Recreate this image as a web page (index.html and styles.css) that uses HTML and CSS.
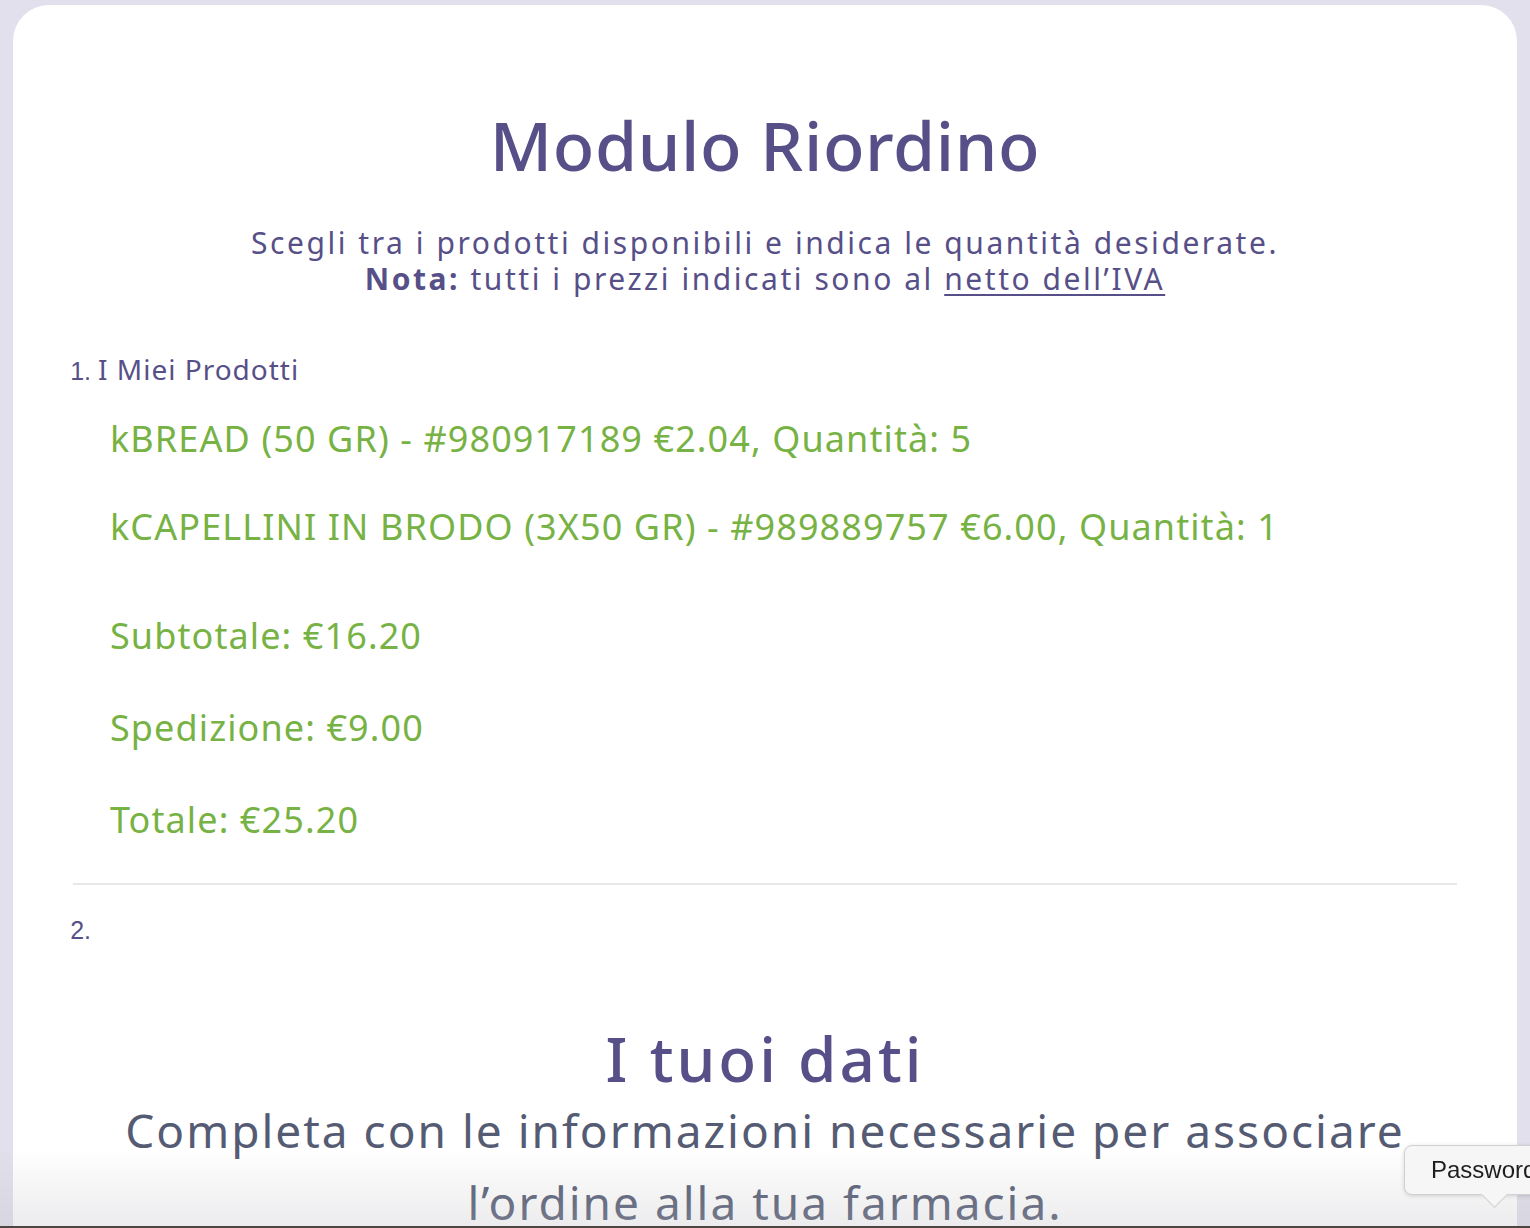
FILE: index.html
```html
<!DOCTYPE html>
<html lang="it">
<head>
    <meta charset="UTF-8">
    <meta name="viewport" content="width=device-width, initial-scale=1.0">
    <title>Modulo Riordino</title>
    <link rel="stylesheet" href="styles.css">
</head>
<body>
    <main class="card">
        <header class="intro">
            <h1>Modulo Riordino</h1>
            <p>
                Scegli tra i prodotti disponibili e indica le quantità desiderate.<br>
                <strong>Nota:</strong> tutti i prezzi indicati sono al <u>netto dell’IVA</u>
            </p>
        </header>

        <ol class="steps">
            <li>
                <span class="step-title">I Miei Prodotti</span>
                <div class="products">
                    <p>kBREAD (50 GR) - #980917189 €2.04, Quantità: 5</p>
                    <p>kCAPELLINI IN BRODO (3X50 GR) - #989889757 €6.00, Quantità: 1</p>
                </div>
                <div class="totals">
                    <p>Subtotale: €16.20</p>
                    <p>Spedizione: €9.00</p>
                    <p>Totale: €25.20</p>
                </div>
                <hr>
            </li>
            <li></li>
        </ol>

        <section class="your-data">
            <h2>I tuoi dati</h2>
            <p>Completa con le informazioni necessarie per associare l’ordine alla tua farmacia.</p>
        </section>
    </main>

    <!-- bottom edge of the window + password autofill hint -->
    <div class="bottom-fade"></div>
    <div class="autofill-hint">Password</div>
</body>
</html>
```

FILE: styles.css
```css
:root {
    --bg: #e1e0ec;
    --card: #ffffff;
    --purple: #574f88;
    --green: #77b244;
    --slate: #545b73;
    --line: #e8e8e8;
}

* {
    margin: 0;
    padding: 0;
    box-sizing: border-box;
}

html {
    overflow: hidden;
}

body {
    font-family: 'Noto Sans', sans-serif;
    background: var(--bg);
    padding: 5px 13px 0;
    color: var(--purple);
}

.card {
    background: var(--card);
    border-radius: 36px 36px 0 0;
    padding: 96px 60px 40px;
    min-height: 1400px;
}

.intro {
    text-align: center;
}

.intro h1 {
    font-size: 68px;
    font-weight: 500;
    line-height: 88px;
    letter-spacing: 0.6px;
}

.intro p {
    margin-top: 36px;
    font-size: 30px;
    line-height: 36px;
    letter-spacing: 2.55px;
}

.intro strong {
    font-weight: 700;
}

.intro u {
    text-decoration-thickness: 2px;
    text-underline-offset: 4px;
}

.steps {
    margin-top: 52px;
    padding-left: 25px;
}

.steps li::marker {
    font-family: 'Liberation Sans', sans-serif;
    font-size: 25px;
}

.step-title {
    font-size: 28px;
    line-height: 40px;
    letter-spacing: 1px;
}

.products,
.totals {
    padding-left: 12px;
    color: var(--green);
    font-size: 36px;
    letter-spacing: 1.1px;
}

.products {
    margin-top: 25px;
}

.products p {
    line-height: 50px;
    margin-bottom: 38px;
}

.totals {
    margin-top: 59px;
}

.totals p {
    line-height: 50px;
    margin-bottom: 42px;
}

.steps hr {
    border: none;
    border-top: 2px solid var(--line);
    margin: -4px 0 0 -25px;
}

.steps li + li {
    margin-top: 26px;
    font-size: 26px;
    line-height: 36px;
    height: 36px;
}

.your-data {
    text-align: center;
    margin-top: 75px;
}

.your-data h2 {
    font-size: 62px;
    font-weight: 500;
    line-height: 72px;
    letter-spacing: 3px;
}

.your-data p {
    color: var(--slate);
    font-size: 46px;
    line-height: 72px;
    letter-spacing: 2px;
    padding: 0 40px;
}

.bottom-fade {
    position: fixed;
    left: 0;
    right: 0;
    bottom: 0;
    height: 78px;
    background: linear-gradient(to bottom, rgba(190, 190, 196, 0) 0%, rgba(190, 190, 196, 0.3) 100%);
    border-bottom: 2px solid #4d4640;
    pointer-events: none;
}

.autofill-hint {
    position: fixed;
    left: 1404px;
    top: 1145px;
    width: 200px;
    height: 50px;
    padding: 0 26px;
    background: #f6f6f6;
    border: 1px solid #d0d0d0;
    border-radius: 8px;
    box-shadow: 0 1px 4px rgba(0, 0, 0, 0.15);
    font-family: 'Liberation Sans', sans-serif;
    font-size: 24px;
    line-height: 48px;
    color: #1e1e1e;
}

.autofill-hint::after {
    content: "";
    position: absolute;
    left: 80px;
    bottom: -10px;
    width: 18px;
    height: 18px;
    background: #f6f6f6;
    border-right: 1px solid #d0d0d0;
    border-bottom: 1px solid #d0d0d0;
    transform: rotate(45deg);
}
```
